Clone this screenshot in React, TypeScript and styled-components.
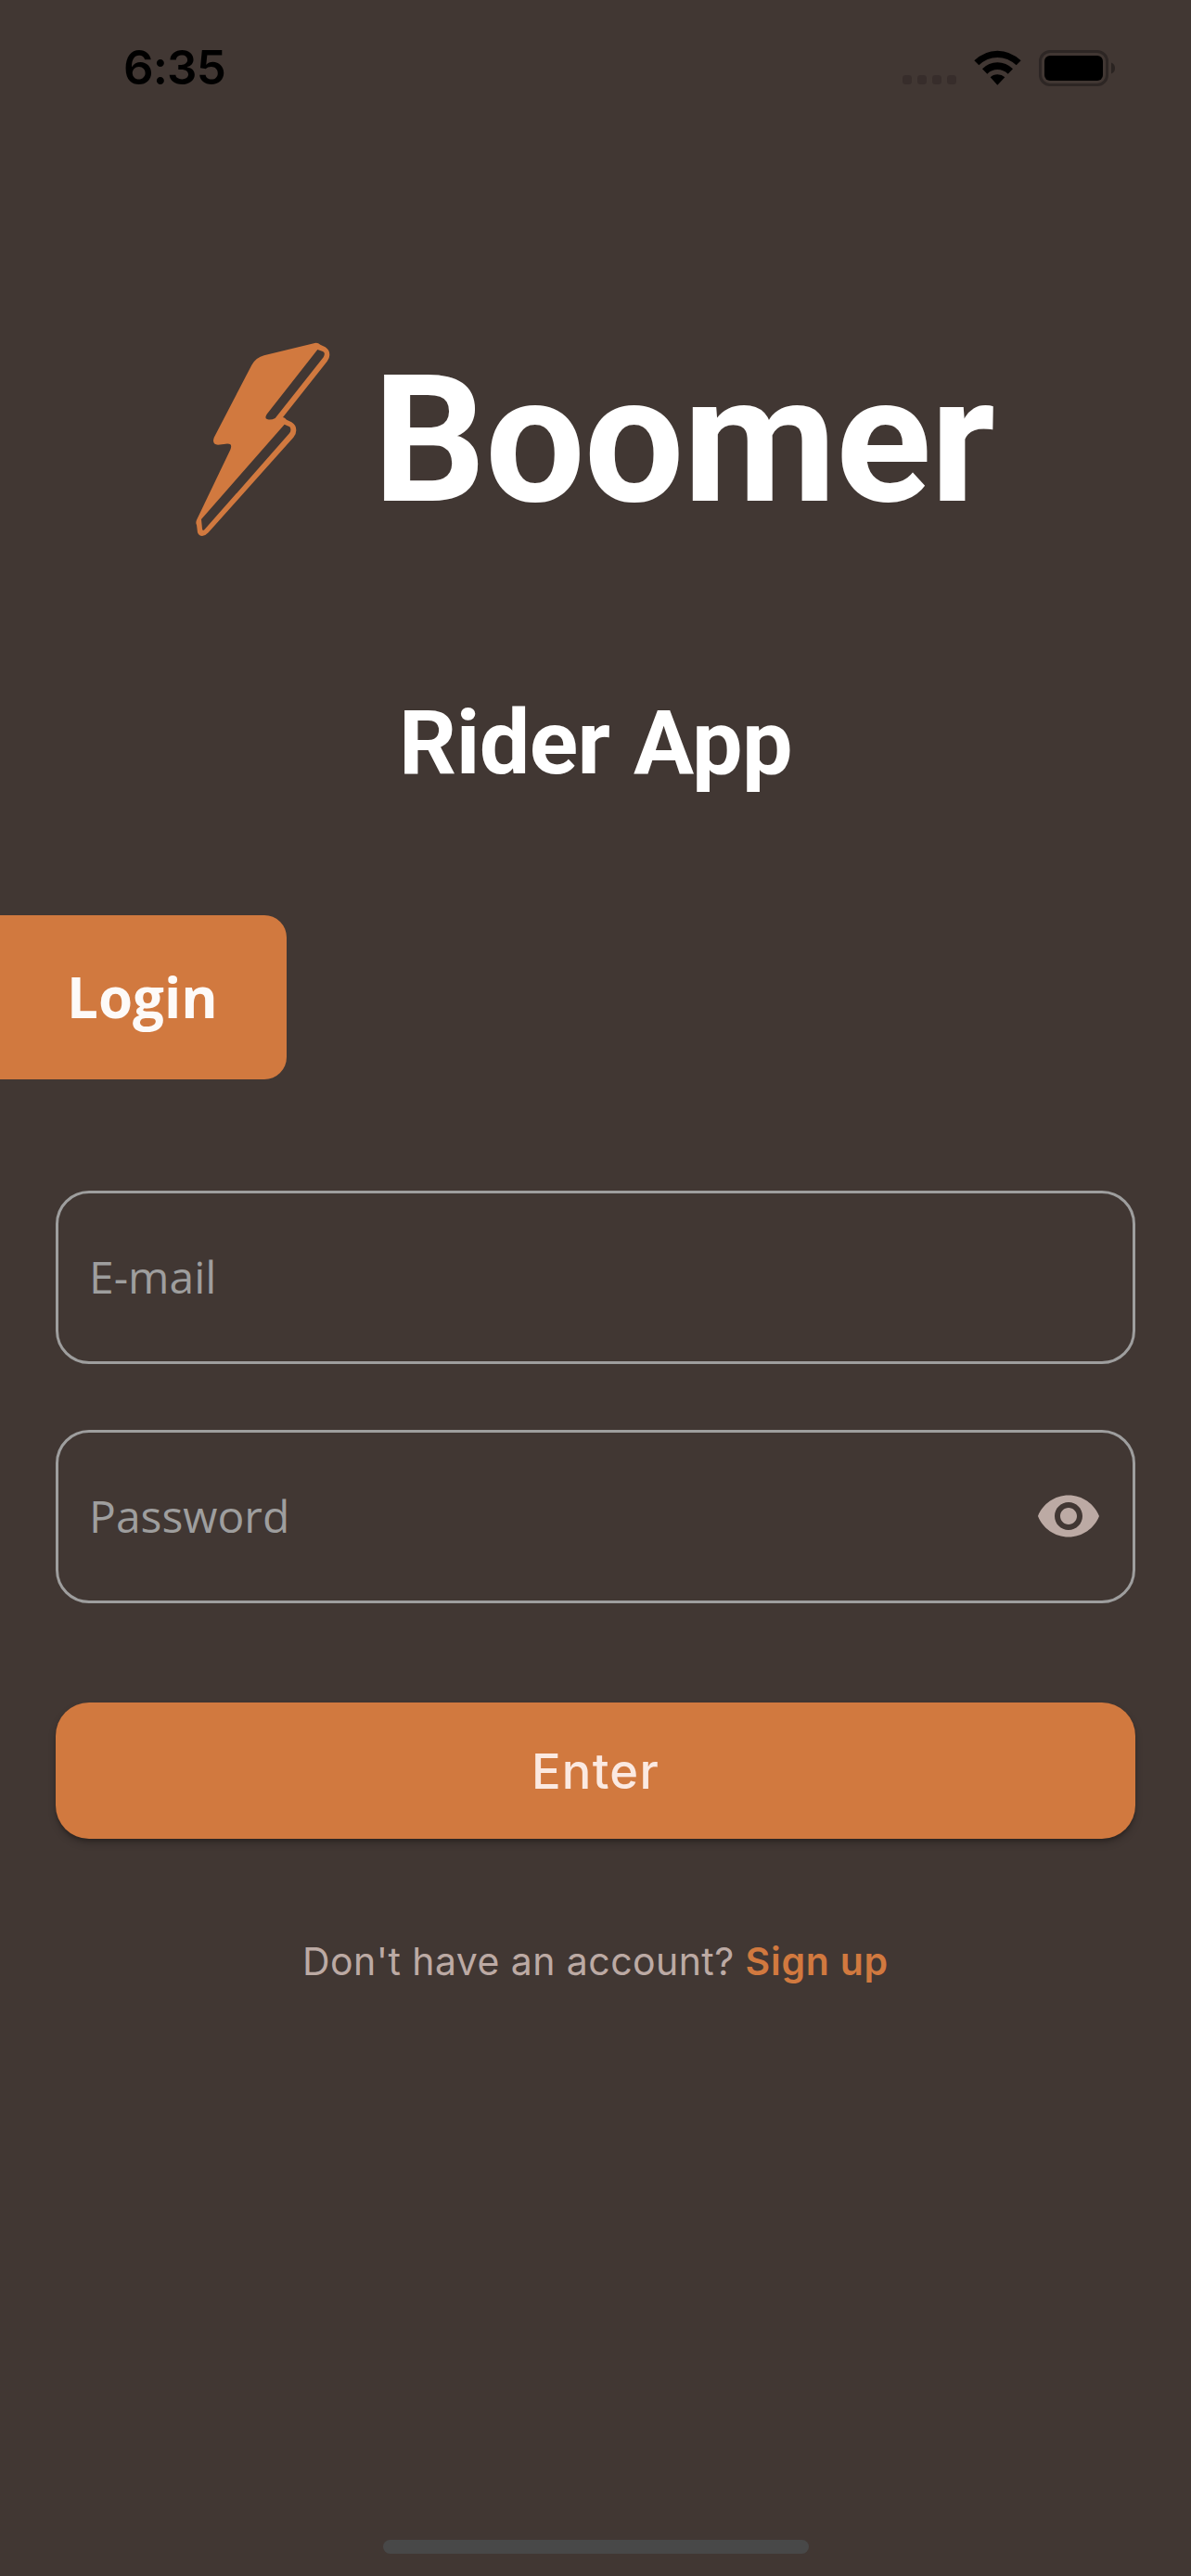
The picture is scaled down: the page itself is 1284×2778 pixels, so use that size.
import React, { useState } from "react";
import styled, { createGlobalStyle } from "styled-components";

const color = {
  background: "#413733",
  primary: "#d1793f",
  outline: "#9e9e9e",
  muted: "#bcaaa4",
  onPrimary: "#fbe9e1",
};

const GlobalStyle = createGlobalStyle`
  *, *::before, *::after { box-sizing: border-box; }
  body { margin: 0; background: ${color.background}; }
`;

const Screen = styled.main`
  display: flex;
  flex-direction: column;
  width: 1284px;
  height: 2778px;
  overflow: hidden;
  background: ${color.background};
  font-family: Inter, "Liberation Sans", sans-serif;
`;

const StatusBar = styled.header`
  display: flex;
  justify-content: space-between;
  align-items: center;
  height: 146px;
  padding: 0 82px 0 133px;
  flex: none;
`;

const Clock = styled.time`
  font-size: 51px;
  line-height: 60px;
  font-weight: 600;
  letter-spacing: -0.9px;
  color: #000;
`;

const Indicators = styled.div`
  display: flex;
  align-items: center;
`;

const SignalDots = styled.div`
  display: flex;
  gap: 6px;
  margin: 26px 19px 0 0;
`;

const Dot = styled.span`
  width: 10px;
  height: 10px;
  border-radius: 3.5px;
  background: #372d2b;
`;

const WifiIcon = styled.svg`
  display: block;
  width: 51px;
  height: 38px;
  margin-right: 19px;
`;

const BatteryIcon = styled.svg`
  display: block;
  width: 82px;
  height: 39px;
`;

const Brand = styled.section`
  display: flex;
  align-items: center;
  height: 250px;
  margin-top: 204px;
  padding-left: 190px;
  flex: none;
`;

const BoltIcon = styled.svg`
  width: 200px;
  height: 250px;
  flex: none;
`;

const BrandName = styled.h1`
  margin: 0 0 0 12px;
  font: 700 191px/220px Roboto, "Liberation Sans", sans-serif;
  letter-spacing: -1px;
  color: #fff;
`;

const Subtitle = styled.h2`
  margin: 141px 0 0;
  text-align: center;
  font: 700 97px/120px Roboto, "Liberation Sans", sans-serif;
  letter-spacing: -0.6px;
  word-spacing: 2px;
  color: #fff;
`;

const LoginTab = styled.div`
  display: flex;
  align-items: center;
  width: 309px;
  height: 177px;
  margin-top: 126px;
  padding: 0 0 2px 72px;
  flex: none;
  border-radius: 0 24px 24px 0;
  background: ${color.primary};
  font: 700 60px/80px "Open Sans", "Noto Sans", sans-serif;
  color: #fdfaf8;
`;

const Form = styled.form`
  display: flex;
  flex-direction: column;
  margin-top: 120px;
  padding: 0 60px;
`;

const Field = styled.label`
  display: flex;
  align-items: center;
  height: 187px;
  margin-bottom: 71px;
  padding: 0 33px 1px;
  border: 3px solid ${color.outline};
  border-radius: 36px;
`;

const Input = styled.input`
  flex: 1;
  min-width: 0;
  height: 80px;
  padding: 0 0 1px;
  border: 0;
  outline: 0;
  background: transparent;
  font: 400 48px/78px "Open Sans", "Noto Sans", sans-serif;
  color: #fff;

  &::placeholder {
    color: ${color.outline};
    opacity: 1;
  }
`;

const EyeButton = styled.button`
  display: flex;
  padding: 0;
  border: 0;
  background: none;
`;

const EyeIcon = styled.svg`
  width: 72px;
  height: 72px;
  fill: ${color.muted};
`;

const EnterButton = styled.button`
  height: 147px;
  margin-top: 36px;
  padding: 0;
  border: 0;
  border-radius: 36px;
  background: ${color.primary};
  box-shadow: 0 3px 3px rgba(0, 0, 0, 0.14), 0 5px 8px rgba(0, 0, 0, 0.2);
  font: 500 52.5px/64px Inter, "Liberation Sans", sans-serif;
  letter-spacing: 1.3px;
  color: ${color.onPrimary};
`;

const Prompt = styled.p`
  margin: 102px 0 0;
  text-align: center;
  font-size: 41px;
  line-height: 60px;
  letter-spacing: 0.43px;
  color: ${color.muted};
`;

const SignUp = styled.a`
  font-weight: 600;
  letter-spacing: 0.75px;
  color: ${color.primary};
`;

const HomeIndicator = styled.div`
  align-self: center;
  width: 459px;
  height: 15px;
  margin: auto 0 24px;
  flex: none;
  border-radius: 8px;
  background: #484848;
`;

export default function App() {
  const [visible, setVisible] = useState(false);

  return (
    <Screen>
      <GlobalStyle />
      <StatusBar>
        <Clock>6:35</Clock>
        <Indicators>
          <SignalDots>
            <Dot />
            <Dot />
            <Dot />
            <Dot />
          </SignalDots>
          <WifiIcon viewBox="0 0 153 114">
            <path d="M1 34Q34 2 76 2T152 34L137 49Q110 24 76 24T16 49Z" />
            <path d="M27 61Q48 40 76 40T126 61L110 77Q95 63 76 63T43 77Z" />
            <path d="M53 88Q62 79 76 79T100 88L76 113Z" />
          </WifiIcon>
          <BatteryIcon viewBox="0 0 82 39">
            <rect x="1.5" y="1.5" width="72" height="36" rx="10.5" fill="none" stroke="#2d2624" strokeWidth="3" />
            <rect x="6" y="6" width="63" height="27" rx="6" />
            <path d="M78 13.5q4 1.5 4 6t-4 6Z" fill="#2a2321" />
          </BatteryIcon>
        </Indicators>
      </StatusBar>

      <Brand>
        <BoltIcon viewBox="0 0 600 750">
          <path
            fill={color.primary}
            fillRule="evenodd"
            d="M284 100L448 60Q458 58 466 65L482 73Q496 82 496 98Q496 108 488 119L345 300Q351 301 357 308L373 316Q388 325 388 342Q388 355 379 365L104 673Q94 684 84 684Q73 684 69 673L66 648Q62 642 66 632L175 405Q180 392 175 388Q171 385 160 386L135 389Q120 389 120 375L122 366L244 131Q259 106 284 100ZM457 81L294 289Q283 304 296 307Q308 309 320 303L476 106Q484 91 474 87ZM350 323L81 630L84 661Q85 669 91 664L366 352Q374 341 367 331Z"
          />
        </BoltIcon>
        <BrandName>Boomer</BrandName>
      </Brand>
      <Subtitle>Rider App</Subtitle>

      <LoginTab>Login</LoginTab>

      <Form onSubmit={(event) => event.preventDefault()}>
        <Field>
          <Input type="email" placeholder="E-mail" />
        </Field>
        <Field>
          <Input type={visible ? "text" : "password"} placeholder="Password" />
          <EyeButton type="button" aria-label="Toggle password" onClick={() => setVisible(!visible)}>
            <EyeIcon viewBox="0 0 24 24">
              <path d="M12 4.5C7 4.5 2.73 7.61 1 12c1.73 4.39 6 7.5 11 7.5s9.27-3.11 11-7.5c-1.73-4.39-6-7.5-11-7.5zM12 17c-2.76 0-5-2.24-5-5s2.24-5 5-5 5 2.24 5 5-2.24 5-5 5zm0-8c-1.66 0-3 1.34-3 3s1.34 3 3 3 3-1.34 3-3-1.34-3-3-3z" />
            </EyeIcon>
          </EyeButton>
        </Field>
        <EnterButton type="submit">Enter</EnterButton>
      </Form>

      <Prompt>
        Don't have an account? <SignUp>Sign up</SignUp>
      </Prompt>

      <HomeIndicator />
    </Screen>
  );
}
